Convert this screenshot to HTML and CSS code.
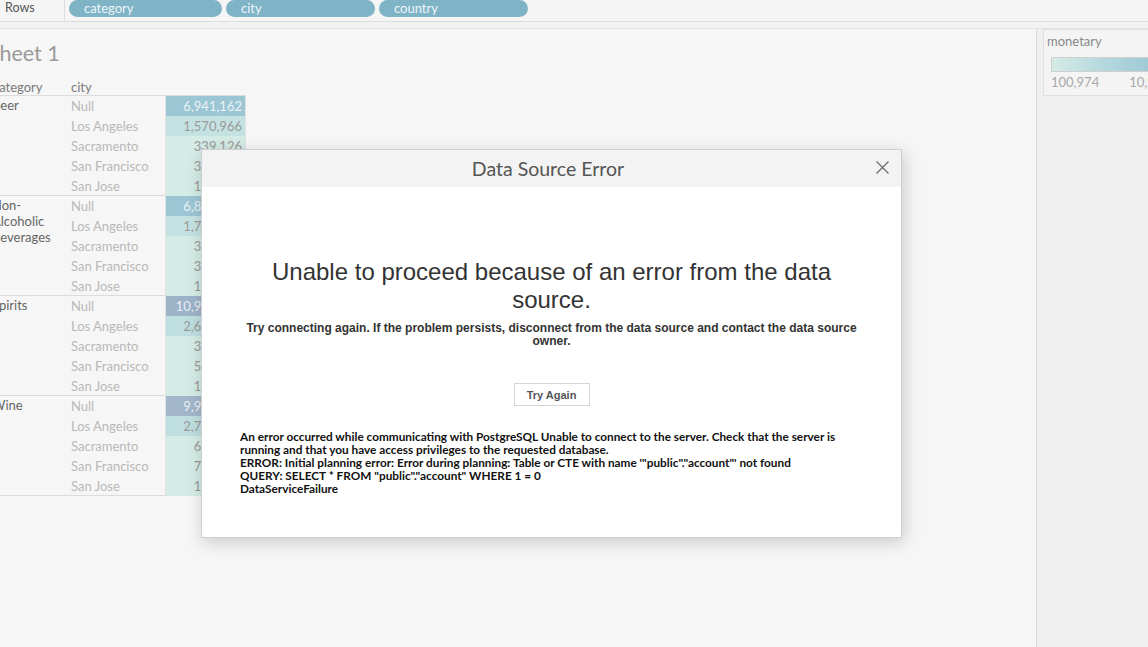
FILE: index.html
```html
<!DOCTYPE html>
<html lang="en">
<head>
<meta charset="utf-8">
<title>Data Source Error</title>
<link rel="stylesheet" href="styles.css">
</head>
<body>
<div class="app">
  <header class="shelf">
    <div class="shelf-label">Rows</div>
    <div class="pills">
      <span class="pill">category</span>
      <span class="pill">city</span>
      <span class="pill">country</span>
    </div>
  </header>
  <div class="band"></div>
  <div class="workspace">
    <main class="sheet">
      <div class="sheet-inner">
        <h1 class="sheet-title">Sheet 1</h1>
        <div class="crosstab">
          <div class="thead">
            <div class="th th-cat">category</div>
            <div class="th th-city">city</div>
            <div class="th th-val"></div>
          </div>

          <div class="group">
            <div class="labels">
              <div class="cat">Beer</div>
              <div class="cities">
                <div class="city">Null</div>
                <div class="city">Los Angeles</div>
                <div class="city">Sacramento</div>
                <div class="city">San Francisco</div>
                <div class="city">San Jose</div>
              </div>
            </div>
            <div class="vals">
              <div class="v v-hi">6,941,162</div>
              <div class="v v-mid">1,570,966</div>
              <div class="v v-lo">339,126</div>
              <div class="v v-lo">352,418</div>
              <div class="v v-lo">141,205</div>
            </div>
          </div>

          <div class="group">
            <div class="labels">
              <div class="cat">Non-Alcoholic Beverages</div>
              <div class="cities">
                <div class="city">Null</div>
                <div class="city">Los Angeles</div>
                <div class="city">Sacramento</div>
                <div class="city">San Francisco</div>
                <div class="city">San Jose</div>
              </div>
            </div>
            <div class="vals">
              <div class="v v-hi">6,812,540</div>
              <div class="v v-mid">1,734,221</div>
              <div class="v v-lo">348,902</div>
              <div class="v v-lo">361,377</div>
              <div class="v v-lo">139,846</div>
            </div>
          </div>

          <div class="group">
            <div class="labels">
              <div class="cat">Spirits</div>
              <div class="cities">
                <div class="city">Null</div>
                <div class="city">Los Angeles</div>
                <div class="city">Sacramento</div>
                <div class="city">San Francisco</div>
                <div class="city">San Jose</div>
              </div>
            </div>
            <div class="vals">
              <div class="v v-top">10,932,610</div>
              <div class="v v-mid2">2,641,083</div>
              <div class="v v-lo">372,519</div>
              <div class="v v-lo">518,264</div>
              <div class="v v-lo">162,730</div>
            </div>
          </div>

          <div class="group">
            <div class="labels">
              <div class="cat">Wine</div>
              <div class="cities">
                <div class="city">Null</div>
                <div class="city">Los Angeles</div>
                <div class="city">Sacramento</div>
                <div class="city">San Francisco</div>
                <div class="city">San Jose</div>
              </div>
            </div>
            <div class="vals">
              <div class="v v-top2">9,918,447</div>
              <div class="v v-mid2">2,712,395</div>
              <div class="v v-lo">604,118</div>
              <div class="v v-lo">712,806</div>
              <div class="v v-lo">158,372</div>
            </div>
          </div>
        </div>
      </div>
    </main>
    <aside class="side">
      <div class="legend">
        <div class="legend-title">monetary</div>
        <div class="legend-bar"></div>
        <div class="legend-scale">
          <span>100,974</span>
          <span>10,932,610</span>
        </div>
      </div>
    </aside>
  </div>

  <div class="dialog" role="dialog" aria-labelledby="dlg-title">
    <div class="dialog-head">
      <div class="dialog-title" id="dlg-title">Data Source Error</div>
      <button class="dialog-close" aria-label="Close">
        <svg width="13" height="13" viewBox="0 0 13 13"><path d="M0.5 0.5 L12.5 12.5 M12.5 0.5 L0.5 12.5" stroke="#666" stroke-width="1.1" fill="none"/></svg>
      </button>
    </div>
    <div class="dialog-body">
      <h2 class="err-heading">Unable to proceed because of an error from the data source.</h2>
      <p class="err-sub">Try connecting again. If the problem persists, disconnect from the data source and contact the data source owner.</p>
      <button class="btn">Try Again</button>
      <div class="err-detail">
        <div>An error occurred while communicating with PostgreSQL Unable to connect to the server. Check that the server is running and that you have access privileges to the requested database.</div>
        <div>ERROR: Initial planning error: Error during planning: Table or CTE with name '"public"."account"' not found</div>
        <div>QUERY: SELECT * FROM "public"."account" WHERE 1 = 0</div>
        <div>DataServiceFailure</div>
      </div>
    </div>
  </div>
</div>
</body>
</html>
```

FILE: styles.css
```css
* { box-sizing: border-box; }

html, body {
  margin: 0;
  padding: 0;
  width: 1148px;
  height: 647px;
  overflow: hidden;
  background: #f6f6f6;
  font-family: "Lato", "Liberation Sans", sans-serif;
}

.app {
  position: relative;
  width: 1148px;
  height: 647px;
  display: flex;
  flex-direction: column;
}

/* Rows shelf */
.shelf {
  height: 22px;
  display: flex;
  align-items: flex-start;
  background: #f5f5f5;
  border-bottom: 1px solid #dcdcdc;
  flex: none;
}
.shelf-label {
  width: 65px;
  height: 21px;
  padding-left: 5px;
  border-right: 1px solid #dcdcdc;
  font-size: 12.5px;
  line-height: 16px;
  color: #555;
}
.pills {
  display: flex;
  gap: 4px;
  padding-left: 4px;
}
.pill {
  height: 17px;
  border-radius: 9px;
  background: #7fb3c6;
  color: #eef5f8;
  font-size: 13px;
  line-height: 17px;
  padding-left: 15px;
}
.pill:nth-child(1) { width: 153px; }
.pill:nth-child(2) { width: 149px; }
.pill:nth-child(3) { width: 149px; }

.band {
  height: 7px;
  flex: none;
  background: #f2f2f2;
  border-bottom: 1px solid #e4e4e4;
}

/* workspace */
.workspace {
  flex: 1;
  display: flex;
  min-height: 0;
}
.sheet {
  flex: 1;
  background: #f6f6f6;
  overflow: hidden;
}
.sheet-inner {
  margin-left: -13px;
  padding-top: 11px;
}
.sheet-title {
  margin: 0;
  font-size: 21.5px;
  line-height: 26px;
  font-weight: 400;
  color: #9a9a9a;
  padding-left: 1px;
}

.crosstab {
  margin-top: 13px;
  width: 259px;
}
.thead {
  display: flex;
  height: 17px;
  border-bottom: 1px solid #dcdcdc;
}
.th {
  font-size: 13px;
  line-height: 16px;
  color: #7a7a7a;
}
.th-cat { width: 84px; padding-left: 6px; }
.th-city { width: 95px; }
.th-val { width: 80px; }

.group {
  display: flex;
  height: 100px;
}
.labels {
  width: 179px;
  display: flex;
  border-bottom: 1px solid #dcdcdc;
  border-right: 1px solid #e2e2e2;
}
.cat {
  width: 84px;
  padding: 1px 8px 0 5px;
  font-size: 13px;
  line-height: 16px;
  color: #666;
}
.cities {
  width: 94px;
}
.city {
  height: 20px;
  font-size: 13px;
  line-height: 20px;
  color: #b9b9b9;
  white-space: nowrap;
}
.vals {
  width: 80px;
  border-right: 1px solid #e2e2e2;
}
.v {
  height: 20px;
  font-size: 13px;
  line-height: 20px;
  text-align: right;
  padding-right: 3px;
  color: #9a9a9a;
}
.v-hi { background: #9cc6d4; color: #eaf3f6; }
.v-top { background: #9db3c8; color: #eaf0f5; }
.v-top2 { background: #a2b7ca; color: #eaf0f5; }
.v-mid { background: #c5e2e2; }
.v-mid2 { background: #bfdee0; }
.v-lo { background: #d4ebe6; }

/* right panel */
.side {
  width: 112px;
  flex: none;
  background: #f0f0f0;
  border-left: 1px solid #dadada;
  overflow: hidden;
  padding-left: 6px;
}
.legend {
  width: 140px;
  height: 67px;
  border: 1px solid #dfdfdf;
  background: #f4f4f4;
  padding: 2px 0 0 3px;
}
.legend-title {
  font-size: 13px;
  line-height: 18px;
  color: #8a8a8a;
}
.legend-bar {
  margin: 7px 0 0 4px;
  height: 15px;
  border: 1px solid #cfcfcf;
  background: linear-gradient(to right, #d5ebe6 0%, #b5d8de 40%, #8fc0cf 100%);
}
.legend-scale {
  display: flex;
  gap: 30px;
  padding-left: 4px;
  font-size: 13px;
  line-height: 20px;
  color: #a8a8a8;
}

/* dialog */
.dialog {
  position: absolute;
  left: 201px;
  top: 149px;
  width: 701px;
  height: 389px;
  background: #fff;
  border: 1px solid #cfcfcf;
  box-shadow: 2px 4px 16px rgba(0, 0, 0, 0.18);
  display: flex;
  flex-direction: column;
}
.dialog-head {
  height: 37px;
  background: #f3f3f3;
  display: flex;
  align-items: center;
  justify-content: center;
  position: relative;
  flex: none;
}
.dialog-title {
  font-family: "Lato", "Liberation Sans", sans-serif;
  font-size: 19.5px;
  color: #555;
  padding-right: 7px;
}
.dialog-close {
  position: absolute;
  right: 12px;
  top: 11px;
  width: 13px;
  height: 13px;
  padding: 0;
  border: 0;
  background: none;
  display: block;
}
.dialog-close svg { display: block; }

.dialog-body {
  padding: 71px 38px 0;
  text-align: center;
  font-family: "Liberation Sans", Arial, sans-serif;
}
.err-heading {
  margin: 0;
  font-size: 24px;
  line-height: 28px;
  font-weight: 400;
  color: #333;
}
.err-sub {
  margin: 8px 0 0;
  font-size: 12px;
  line-height: 13px;
  font-weight: 700;
  color: #333;
}
.btn {
  margin-top: 35px;
  width: 76px;
  height: 23px;
  background: #fff;
  border: 1px solid #d6d6d6;
  font-family: "Liberation Sans", Arial, sans-serif;
  font-size: 11px;
  font-weight: 700;
  color: #555;
  padding: 0;
}
.err-detail {
  margin-top: 24px;
  text-align: left;
  font-family: "Lato", "Liberation Sans", sans-serif;
  font-size: 11.8px;
  line-height: 13px;
  font-weight: 700;
  color: #111;
}
```
